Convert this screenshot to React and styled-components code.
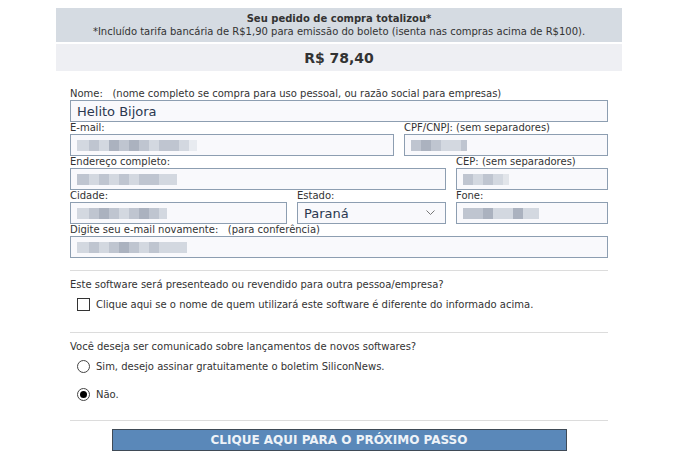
import React from 'react'
import styled, { createGlobalStyle } from 'styled-components'

const GlobalStyle = createGlobalStyle`
  body {
    margin: 0;
    background: #fff;
    font-family: Tahoma, "DejaVu Sans", sans-serif;
    color: #333;
  }
`

const Page = styled.div`
  width: 566px;
  padding: 8px 0 0 56px;
`

const Summary = styled.div`
  height: 34px;
  background: #d5dbe2;
  display: flex;
  flex-direction: column;
  align-items: center;
  justify-content: center;
  font-size: 10px;
  line-height: 13px;
  color: #333;
`

const SummaryTitle = styled.div`
  font-weight: bold;
`

const Total = styled.div`
  margin-top: 2px;
  height: 27px;
  background: #eeeff3;
  display: flex;
  align-items: center;
  justify-content: center;
  font-size: 14px;
  font-weight: bold;
  color: #333;
`

const Form = styled.div`
  width: 538px;
  margin: 17px 0 0 14px;
`

const Row = styled.div`
  display: grid;
  grid-template-columns: ${p => p.cols || '1fr'};
  column-gap: 10px;
`

const Field = styled.div`
  display: flex;
  flex-direction: column;
`

const Label = styled.div`
  height: 12px;
  font-size: 10px;
  line-height: 12px;
  color: #333;
  white-space: pre;
`

const Box = styled.div`
  box-sizing: border-box;
  height: 22px;
  border: 1px solid #8d9eb1;
  background: #f9f9fc;
  display: flex;
  align-items: center;
  justify-content: space-between;
  padding: 0 10px 0 6px;
  font-size: 13px;
  color: #2b3850;
`

const Mosaic = styled.div`
  display: flex;
  height: 11px;
`

const Cell = styled.span`
  width: ${p => p.w}px;
  background: ${p => p.c};
`

const Divider = styled.hr`
  margin: ${p => p.top}px 0 0;
  border: 0;
  border-top: 1px solid #dcdcdc;
  height: 0;
`

const Question = styled.div`
  margin-top: 7px;
  font-size: 10px;
  line-height: 13px;
  color: #333;
`

const Option = styled.label`
  display: flex;
  align-items: center;
  gap: 6px;
  margin-top: ${p => p.top}px;
  padding-left: 7px;
  height: 14px;
  font-size: 10px;
  color: #333;
`

const CheckBox = styled.span`
  box-sizing: border-box;
  width: 13px;
  height: 13px;
  border: 1px solid #333;
  background: #fff;
`

const Radio = styled.span`
  box-sizing: border-box;
  width: 13px;
  height: 13px;
  border: 1px solid #444;
  border-radius: 50%;
  background: #fff;
  display: flex;
  align-items: center;
  justify-content: center;
  &::after {
    content: '';
    width: 7px;
    height: 7px;
    border-radius: 50%;
    background: ${p => (p.checked ? '#000' : 'transparent')};
  }
`

const Submit = styled.button`
  display: block;
  box-sizing: border-box;
  width: 455px;
  height: 22px;
  margin: 8px auto 0;
  padding: 0;
  background: #5a88b9;
  border: 1px solid #3f4a56;
  color: #eef3f8;
  font-family: Tahoma, "DejaVu Sans", sans-serif;
  font-size: 12px;
  font-weight: bold;
  cursor: pointer;
`

const L = '#d3d8e0'
const M = '#bfc5d0'
const D = '#abb2bf'

const masks = {
  email: [[12, L], [10, M], [10, L], [10, D], [10, M], [10, D], [10, M], [10, L], [10, M], [10, M], [10, L], [8, '#e8ebf0']],
  endereco: [[12, M], [10, L], [10, M], [10, L], [10, M], [10, L], [10, M], [10, M], [10, L], [8, L]],
  cpf: [[10, M], [10, D], [10, M], [10, L], [10, L], [6, M]],
  cep: [[10, M], [10, L], [10, M], [10, L], [6, '#e2e5ea']],
  cidade: [[12, L], [10, M], [10, D], [10, M], [10, L], [10, M], [10, D], [10, M], [8, L]],
  fone: [[10, M], [10, M], [10, D], [10, L], [10, L], [10, D], [10, L], [6, L]],
  digite: [[12, L], [10, M], [10, L], [10, M], [10, D], [10, M], [10, L], [10, M], [10, L], [10, L], [8, L]],
}

function Masked({ cells }) {
  return (
    <Mosaic>
      {cells.map(([w, c], i) => <Cell key={i} w={w} c={c} />)}
    </Mosaic>
  )
}

function Chevron() {
  return (
    <svg width="9" height="6" viewBox="0 0 9 6">
      <path d="M0.5 0.5 L4.5 4.5 L8.5 0.5" fill="none" stroke="#777" strokeWidth="1" />
    </svg>
  )
}

export default function App() {
  return (
    <>
      <GlobalStyle />
      <Page>
        <Summary>
          <SummaryTitle>Seu pedido de compra totalizou*</SummaryTitle>
          <div>*Incluído tarifa bancária de R$1,90 para emissão do boleto (isenta nas compras acima de R$100).</div>
        </Summary>
        <Total>R$ 78,40</Total>

        <Form>
          <Field>
            <Label>{'Nome:   (nome completo se compra para uso pessoal, ou razão social para empresas)'}</Label>
            <Box>Helito Bijora</Box>
          </Field>
          <Row cols="324px 204px">
            <Field>
              <Label>E-mail:</Label>
              <Box><Masked cells={masks.email} /></Box>
            </Field>
            <Field>
              <Label>CPF/CNPJ: (sem separadores)</Label>
              <Box><Masked cells={masks.cpf} /></Box>
            </Field>
          </Row>
          <Row cols="376px 152px">
            <Field>
              <Label>Endereço completo:</Label>
              <Box><Masked cells={masks.endereco} /></Box>
            </Field>
            <Field>
              <Label>CEP: (sem separadores)</Label>
              <Box><Masked cells={masks.cep} /></Box>
            </Field>
          </Row>
          <Row cols="217px 149px 152px">
            <Field>
              <Label>Cidade:</Label>
              <Box><Masked cells={masks.cidade} /></Box>
            </Field>
            <Field>
              <Label>Estado:</Label>
              <Box>Paraná<Chevron /></Box>
            </Field>
            <Field>
              <Label>Fone:</Label>
              <Box><Masked cells={masks.fone} /></Box>
            </Field>
          </Row>
          <Field>
            <Label>{'Digite seu e-mail novamente:   (para conferência)'}</Label>
            <Box><Masked cells={masks.digite} /></Box>
          </Field>

          <Divider top={12} />
          <Question>Este software será presenteado ou revendido para outra pessoa/empresa?</Question>
          <Option top={6}>
            <CheckBox />
            Clique aqui se o nome de quem utilizará este software é diferente do informado acima.
          </Option>

          <Divider top={21} />
          <Question>Você deseja ser comunicado sobre lançamentos de novos softwares?</Question>
          <Option top={6}>
            <Radio />
            Sim, desejo assinar gratuitamente o boletim SiliconNews.
          </Option>
          <Option top={14}>
            <Radio checked />
            Não.
          </Option>

          <Divider top={19} />
          <Submit>CLIQUE AQUI PARA O PRÓXIMO PASSO</Submit>
        </Form>
      </Page>
    </>
  )
}
